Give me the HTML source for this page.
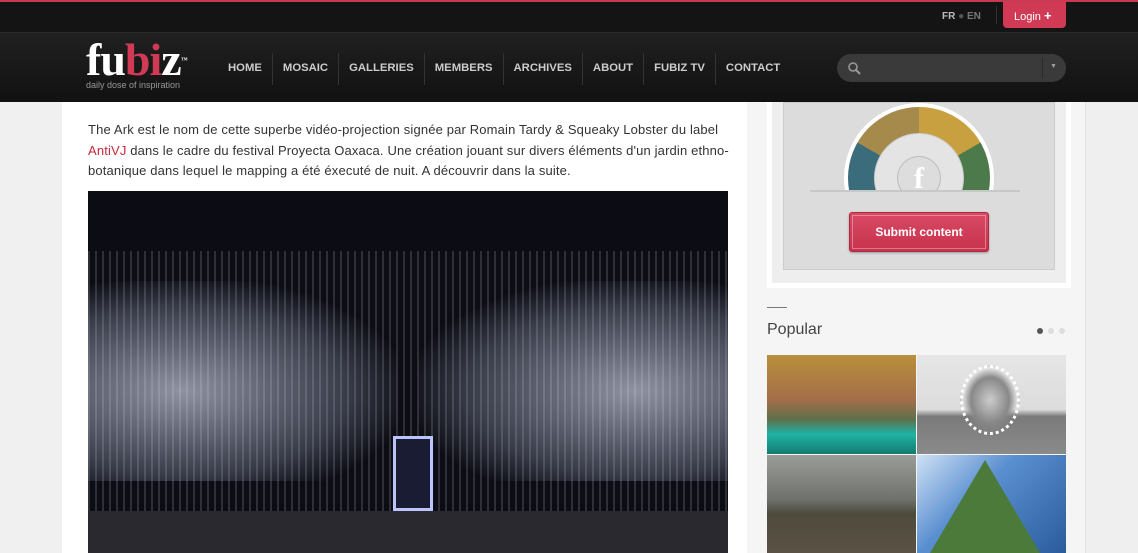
<!DOCTYPE html>
<html><head><meta charset="utf-8"><style>
*{margin:0;padding:0;box-sizing:border-box}
body{width:1138px;height:553px;overflow:hidden;background:#efefef;font-family:"Liberation Sans",Arial,sans-serif;position:relative}
.abs{position:absolute}
</style></head><body>
<div class="abs" style="left:0;top:102px;width:62px;height:451px;background:#f0f0f0"></div>
<div class="abs" style="left:62px;top:102px;width:685px;height:451px;background:#fff"></div>
<div class="abs" style="left:747px;top:102px;width:339px;height:451px;background:#f5f5f5;border-right:1px solid #e2e2e2"></div>
<!-- top bar -->
<div class="abs" style="left:0;top:0;width:1138px;height:33px;background:#141414;border-top:2px solid #c83a52;border-bottom:1px solid #2a2a2a"></div>
<div class="abs" style="left:942px;top:11px;font-size:10px;color:#bbb;font-weight:bold">FR <span style="color:#555">●</span> <span style="color:#777">EN</span></div>
<div class="abs" style="left:996px;top:6px;width:1px;height:18px;background:#333"></div>
<div class="abs" style="left:1003px;top:2px;width:63px;height:26px;background:#d03a55;border-radius:0 0 4px 4px;color:#fff;font-size:11px;padding:6px 0 0 11px">Login <b style="font-size:13px">+</b></div>
<!-- nav -->
<div class="abs" style="left:0;top:33px;width:1138px;height:69px;background:linear-gradient(#202020,#111)"></div>
<div class="abs" style="left:86px;top:36px;font-family:'Liberation Serif',serif;font-weight:bold;font-size:46px;color:#fff;letter-spacing:-1px;line-height:48px">fu<span style="color:#d03a55">bi</span>z<span style="font-size:7px;vertical-align:top;letter-spacing:0">™</span></div>
<div class="abs" style="left:86px;top:80px;font-size:9px;color:#999">daily dose of inspiration</div>
<div class="abs" style="left:218px;top:53px;height:32px;display:flex;font-size:11.3px;color:#ccc;font-weight:bold;letter-spacing:0">
<span style="padding:9px 10px;border-right:1px solid #333">HOME</span>
<span style="padding:9px 10px;border-right:1px solid #333">MOSAIC</span>
<span style="padding:9px 10px;border-right:1px solid #333">GALLERIES</span>
<span style="padding:9px 10px;border-right:1px solid #333">MEMBERS</span>
<span style="padding:9px 10px;border-right:1px solid #333">ARCHIVES</span>
<span style="padding:9px 10px;border-right:1px solid #333">ABOUT</span>
<span style="padding:9px 10px;border-right:1px solid #333">FUBIZ TV</span>
<span style="padding:9px 10px">CONTACT</span></div>
<div class="abs" style="left:837px;top:54px;width:229px;height:28px;background:#3a3a3a;border-radius:14px"></div>
<svg class="abs" style="left:847px;top:61px" width="14" height="14"><circle cx="6" cy="6" r="4" stroke="#999" stroke-width="1.6" fill="none"/><line x1="9" y1="9" x2="13" y2="13" stroke="#999" stroke-width="2"/></svg>
<div class="abs" style="left:1042px;top:58px;width:1px;height:20px;background:#2a2a2a"></div>
<div class="abs" style="left:1050px;top:63px;font-size:7px;color:#999">▼</div>
<!-- article -->
<div class="abs" style="left:88px;top:120px;white-space:nowrap;font-size:13px;line-height:20.5px;color:#333;letter-spacing:0.15px">The Ark est le nom de cette superbe vidéo-projection signée par Romain Tardy &amp; Squeaky Lobster du label<br><span style="color:#c8283c">AntiVJ</span> dans le cadre du festival Proyecta Oaxaca. Une création jouant sur divers éléments d'un jardin ethno-<br>botanique dans lequel le mapping a été éxecuté de nuit. A découvrir dans la suite.</div>
<div class="abs" style="left:88px;top:191px;width:640px;height:362px;background:#0c0d14;overflow:hidden">
<div class="abs" style="left:0;top:60px;width:640px;height:302px;background:repeating-linear-gradient(90deg,rgba(200,200,220,.18) 0 2px,transparent 2px 7px)"></div>
<div class="abs" style="left:0;top:90px;width:310px;height:200px;background:radial-gradient(ellipse at 30% 55%,rgba(230,235,255,.6),rgba(180,190,220,.25) 55%,transparent 75%)"></div>
<div class="abs" style="left:330px;top:90px;width:310px;height:200px;background:radial-gradient(ellipse at 70% 55%,rgba(230,235,255,.6),rgba(180,190,220,.25) 55%,transparent 75%)"></div>
<div class="abs" style="left:305px;top:245px;width:40px;height:75px;border:3px solid #bcc4ff;background:#1a1c33"></div>
<div class="abs" style="left:0;top:320px;width:640px;height:42px;background:#2a2930"></div>
</div>
<!-- widget -->
<div class="abs" style="left:767px;top:102px;width:304px;height:186px;background:#eee;border:5px solid #fff;border-top:0"></div>
<div class="abs" style="left:783px;top:102px;width:272px;height:168px;background:#dcdcdc;border:1px solid #ccc"></div>
<div class="abs" style="left:844px;top:103px;width:150px;height:88px;overflow:hidden">
<div style="width:150px;height:150px;border-radius:50%;border:4px solid #fff;background:conic-gradient(#c9a040 0 60deg,#4d7a4a 60deg 120deg,#a35b5a 120deg 240deg,#3b6c7c 240deg 300deg,#a68a4c 300deg)"></div>
<div class="abs" style="left:30px;top:30px;width:90px;height:90px;border-radius:50%;background:#e4e4e4;border:1px solid #ccc"></div>
<div class="abs" style="left:53px;top:53px;width:44px;height:44px;border-radius:50%;background:#ddd;border:1px solid #bbb;color:#fff;font:bold 30px 'Liberation Serif',serif;text-align:center;line-height:44px">f</div>
</div>
<div class="abs" style="left:810px;top:190px;width:210px;height:2px;background:#c8c8c8"></div>
<div class="abs" style="left:849px;top:212px;width:140px;height:40px;background:linear-gradient(#d84a65,#c8324c);border-radius:3px;box-shadow:0 1px 2px rgba(0,0,0,.3);border:1px solid #b02a42"><div style="margin:2px;height:34px;border:1px solid rgba(255,255,255,.35);color:#fff;font-weight:bold;font-size:12px;text-align:center;line-height:32px">Submit content</div></div>
<!-- popular -->
<div class="abs" style="left:767px;top:307px;width:20px;height:1px;background:#777"></div>
<div class="abs" style="left:767px;top:321px;font-size:16px;color:#444">Popular</div>
<div class="abs" style="left:1037px;top:328px;width:6px;height:6px;border-radius:50%;background:#555"></div>
<div class="abs" style="left:1048px;top:328px;width:6px;height:6px;border-radius:50%;background:#ddd"></div>
<div class="abs" style="left:1059px;top:328px;width:6px;height:6px;border-radius:50%;background:#ddd"></div>
<div class="abs" style="left:767px;top:355px;width:149px;height:99px;background:linear-gradient(#b88f3a 0,#a46e4a 45%,#5f6f4a 65%,#1fb3a4 80%,#157a70)"></div>
<div class="abs" style="left:917px;top:355px;width:149px;height:99px;background:linear-gradient(#e6e6e6 0,#dcdcdc 55%,#7a7a7a 62%,#8a8a8a)"></div>
<div class="abs" style="left:960px;top:365px;width:60px;height:70px;border-radius:50%;border:3px dotted #fff;background:radial-gradient(#ccc,#888 50%,transparent 70%)"></div>
<div class="abs" style="left:767px;top:455px;width:149px;height:98px;background:linear-gradient(#9a9c98,#6f726c 45%,#4d4a3c 60%,#5b5245)"></div>
<div class="abs" style="left:917px;top:455px;width:149px;height:98px;background:linear-gradient(135deg,#cfe1f5 0,#5a8fd0 40%,#2a5c9c)"></div>
<div class="abs" style="left:930px;top:460px;width:110px;height:93px;background:#4b7a3a;clip-path:polygon(50% 0,100% 100%,0 100%)"></div>
</body></html>
